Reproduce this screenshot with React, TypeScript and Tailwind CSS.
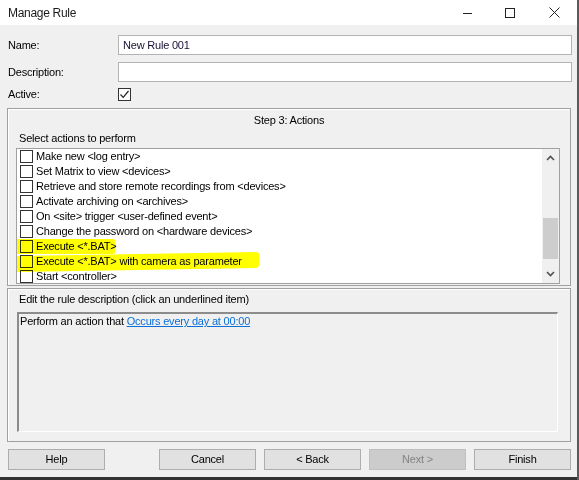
import React from "react";

const actions = [
    "Make new <log entry>",
    "Set Matrix to view <devices>",
    "Retrieve and store remote recordings from <devices>",
    "Activate archiving on <archives>",
    "On <site> trigger <user-defined event>",
    "Change the password on <hardware devices>",
    "Execute <*.BAT>",
    "Execute <*.BAT> with camera as parameter",
    "Start <controller>",
];

function Box() {
    return (
        <span className="block w-[13px] h-[13px] border border-[#333333] bg-white shrink-0"></span>
    );
}

function WinButton({ label, disabled }: { label: string; disabled?: boolean }) {
    return (
        <button
            className={
                disabled
                    ? "w-[97px] h-[21px] border border-[#bfbfbf] bg-[#cccccc] text-[#838383] text-[11px]"
                    : "w-[97px] h-[21px] border border-[#adadad] bg-[#e1e1e1] text-black text-[11px]"
            }>
            {label}
        </button>
    );
}

export default function App() {
    return (
        <div
            className="w-[579px] h-[480px] bg-[#f0f0f0] flex flex-col text-[11px] tracking-[-0.2px] text-black border-r-2 border-[#5a5a5a] overflow-hidden"
            style={{ fontFamily: '"Liberation Sans", Arial, sans-serif' }}>
            {/* title bar */}
            <div className="h-[25px] bg-white flex items-center shrink-0">
                <span className="pl-[8px] text-[12px] tracking-[-0.3px] text-[#1a1a1a]">Manage Rule</span>
                <div className="ml-auto flex items-center h-full">
                    <svg width="9" height="10" viewBox="0 0 9 10" className="mr-[33px]">
                        <line x1="0" y1="5.5" x2="9" y2="5.5" stroke="#222" strokeWidth="1" />
                    </svg>
                    <svg width="10" height="10" viewBox="0 0 10 10" className="mr-[34px]">
                        <rect x="0.5" y="0.5" width="9" height="9" fill="none" stroke="#222" strokeWidth="1" />
                    </svg>
                    <svg width="11" height="11" viewBox="0 0 11 11" className="mr-[17px]">
                        <path d="M0.5 0.5 L10.5 10.5 M10.5 0.5 L0.5 10.5" stroke="#222" strokeWidth="1" />
                    </svg>
                </div>
            </div>

            {/* fields */}
            <div className="flex items-center mt-[10px] h-[20px]">
                <span className="w-[118px] pl-[8px]">Name:</span>
                <div className="w-[454px] h-[20px] border border-[#b4b4b4] bg-white flex items-center pl-[4px] text-[#1a0f33]">
                    New Rule 001
                </div>
            </div>
            <div className="flex items-center mt-[7px] h-[20px]">
                <span className="w-[118px] pl-[8px]">Description:</span>
                <div className="w-[454px] h-[20px] border border-[#b4b4b4] bg-white"></div>
            </div>
            <div className="flex items-center mt-[6px] h-[13px]">
                <span className="w-[118px] pl-[8px]">Active:</span>
                <span className="w-[13px] h-[13px] border border-[#333333] bg-white flex items-center justify-center">
                    <svg width="11" height="11" viewBox="0 0 11 11">
                        <path d="M1.5 5.5 L4.2 8.3 L9.5 2" fill="none" stroke="#222" strokeWidth="1.2" />
                    </svg>
                </span>
            </div>

            {/* step 3 group */}
            <div className="mt-[7px] ml-[7px] w-[564px] h-[178px] border border-[#a0a0a0] shadow-[inset_1px_1px_0_#ffffff] flex flex-col">
                <div className="text-center mt-[5px] leading-[13px]">Step 3: Actions</div>
                <div className="pl-[11px] mt-[5px] leading-[13px]">Select actions to perform</div>
                <div className="ml-[8px] mt-[3px] w-[544px] h-[136px] border border-[#a0a0a0] bg-white flex relative overflow-hidden">
                    <div className="flex-1 flex flex-col">
                        {actions.map((a) => (
                            <div key={a} className="h-[15px] flex items-center pl-[3px] gap-[3px] leading-[15px] whitespace-nowrap">
                                <Box />
                                <span>{a}</span>
                            </div>
                        ))}
                    </div>
                    {/* marker highlights */}
                    <div className="absolute left-[-3px] top-[90px] w-[101px] h-[15px] bg-[#ffff00] mix-blend-multiply rounded-[2px]"></div>
                    <div className="absolute left-[-3px] top-[105px] w-[245px] h-[16px] bg-[#ffff00] mix-blend-multiply rounded-[3px] -skew-y-1"></div>
                    {/* scrollbar */}
                    <div className="w-[17px] h-full bg-[#f0f0f0] flex flex-col items-center">
                        <svg width="9" height="6" viewBox="0 0 9 6" className="mt-[6px]">
                            <path d="M1 5 L4.5 1.5 L8 5" fill="none" stroke="#505050" strokeWidth="1.6" />
                        </svg>
                        <div className="mt-[57px] w-[15px] h-[41px] bg-[#cdcdcd]"></div>
                        <svg width="9" height="6" viewBox="0 0 9 6" className="mt-auto mb-[6px]">
                            <path d="M1 1 L4.5 4.5 L8 1" fill="none" stroke="#505050" strokeWidth="1.6" />
                        </svg>
                    </div>
                </div>
            </div>

            {/* description group */}
            <div className="mt-[2px] ml-[7px] w-[564px] h-[154px] border border-[#a0a0a0] shadow-[inset_1px_1px_0_#ffffff] flex flex-col">
                <div className="pl-[11px] mt-[4px] leading-[13px]">Edit the rule description (click an underlined item)</div>
                <div className="ml-[9px] mt-[6px] w-[541px] h-[120px] border-t-2 border-l-2 border-[#8c8c8c] border-r border-b border-r-[#ffffff] border-b-[#ffffff] bg-[#f0f0f0] pl-[1px] leading-[14px]">
                    Perform an action that{" "}
                    <span className="text-[#0b6fd6] underline">Occurs every day at 00:00 </span>
                </div>
            </div>

            {/* buttons */}
            <div className="flex mt-[7px] pl-[8px]">
                <WinButton label="Help" />
                <div className="ml-[54px] flex gap-[8px]">
                    <WinButton label="Cancel" />
                    <WinButton label="< Back" />
                    <WinButton label="Next >" disabled />
                    <WinButton label="Finish" />
                </div>
            </div>
            <div className="mt-auto h-[3px] bg-[#333333]"></div>
        </div>
    );
}
